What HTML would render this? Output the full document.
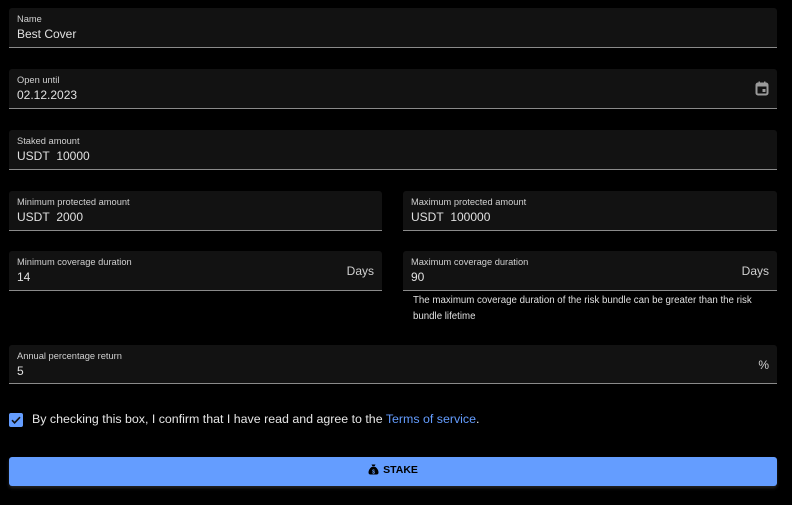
<!DOCTYPE html>
<html><head><style>
*{box-sizing:border-box;margin:0;padding:0}
body{width:792px;height:505px;background:#000;font-family:"Liberation Sans",sans-serif;color:#e6e6e6;position:relative;overflow:hidden}
.f{position:absolute;background:#121212;border-bottom:1px solid #8a8a8a;border-radius:3px 3px 0 0}
.l{position:absolute;left:8px;top:6px;font-size:9.3px;color:#d0d0d0}
.v{position:absolute;left:8px;top:19px;font-size:12px;color:#e0e0e0}
.s{position:absolute;right:8px;top:13px;font-size:12px;color:#d0d0d0}
.h{position:absolute;left:413px;font-size:9.7px;color:#e0e0e0}
</style></head><body>
<div class="f" style="left:9px;top:8px;width:768px;height:40px"><div class="l">Name</div><div class="v">Best Cover</div></div>
<div class="f" style="left:9px;top:69px;width:768px;height:40px"><div class="l">Open until</div><div class="v">02.12.2023</div>
<svg style="position:absolute;right:8px;top:12px" width="14" height="15" viewBox="0 0 14 15"><rect x="1.5" y="2.5" width="11" height="11" rx="1.5" fill="none" stroke="#9a9a9a" stroke-width="2"/><rect x="1.5" y="2.5" width="11" height="3" fill="#9a9a9a"/><rect x="3.5" y="0.5" width="1.5" height="3" fill="#9a9a9a"/><rect x="9" y="0.5" width="1.5" height="3" fill="#9a9a9a"/><rect x="7.5" y="8" width="3" height="3" fill="#9a9a9a"/></svg></div>
<div class="f" style="left:9px;top:130px;width:768px;height:40px"><div class="l">Staked amount</div><div class="v">USDT&nbsp; 10000</div></div>
<div class="f" style="left:9px;top:191px;width:373px;height:40px"><div class="l">Minimum protected amount</div><div class="v">USDT&nbsp; 2000</div></div>
<div class="f" style="left:403px;top:191px;width:374px;height:40px"><div class="l">Maximum protected amount</div><div class="v">USDT&nbsp; 100000</div></div>
<div class="f" style="left:9px;top:251px;width:373px;height:40px"><div class="l">Minimum coverage duration</div><div class="v">14</div><div class="s">Days</div></div>
<div class="f" style="left:403px;top:251px;width:374px;height:40px"><div class="l">Maximum coverage duration</div><div class="v">90</div><div class="s">Days</div></div>
<div class="h" style="top:295px">The maximum coverage duration of the risk bundle can be greater than the risk</div>
<div class="h" style="top:311px">bundle lifetime</div>
<div class="f" style="left:9px;top:345px;width:768px;height:39px"><div class="l">Annual percentage return</div><div class="v">5</div><div class="s">%</div></div>
<div style="position:absolute;left:9px;top:413px;width:14px;height:14px;background:#649dff;border-radius:2px"><svg width="14" height="14" viewBox="0 0 14 14"><path d="M3 7.2l2.6 2.6L11 4.2" fill="none" stroke="#111" stroke-width="1.6"/></svg></div>
<div style="position:absolute;left:32px;top:412px;font-size:12.4px;color:#e6e6e6">By checking this box, I confirm that I have read and agree to the <span style="color:#649dff">Terms of service</span>.</div>
<div style="position:absolute;left:9px;top:457px;width:768px;height:29px;background:#649dff;border-radius:3px;box-shadow:0 2px 3px rgba(255,255,255,.15);font-size:10.5px;font-weight:bold;color:#000;text-align:center;line-height:27px"><svg width="11" height="11" viewBox="0 0 11 11" style="vertical-align:-2px;margin-right:4px"><path d="M3.5 0.5h4l-1 2h-2z M3.5 3h4c2 1.5 3 3.5 3 5.5 0 1.5-1 2-2 2h-6c-1 0-2-.5-2-2 0-2 1-4 3-5.5z" fill="#000"/><text x="5.5" y="9.3" font-size="5" fill="#649dff" text-anchor="middle" font-family="Liberation Sans">$</text></svg>STAKE</div>
</body></html>
